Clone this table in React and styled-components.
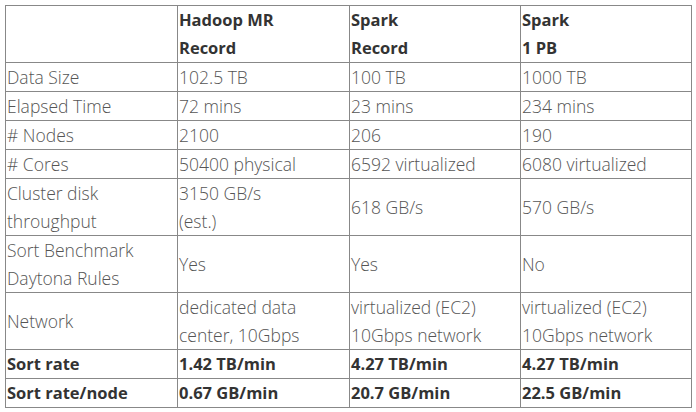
import React from "react";
import styled, { createGlobalStyle } from "styled-components";

const GlobalStyle = createGlobalStyle`
  html, body {
    margin: 0;
    padding: 0;
    background: #fff;
  }
`;

const rows = [
  { label: "Data Size", cells: ["102.5 TB", "100 TB", "1000 TB"] },
  { label: "Elapsed Time", cells: ["72 mins", "23 mins", "234 mins"] },
  { label: "# Nodes", cells: ["2100", "206", "190"] },
  { label: "# Cores", cells: ["50400 physical", "6592 virtualized", "6080 virtualized"] },
  { label: ["Cluster disk", "throughput"], cells: [["3150 GB/s", "(est.)"], "618 GB/s", "570 GB/s"] },
  { label: ["Sort Benchmark", "Daytona Rules"], cells: ["Yes", "Yes", "No"] },
  {
    label: "Network",
    cells: [
      ["dedicated data", "center, 10Gbps"],
      ["virtualized (EC2)", "10Gbps network"],
      ["virtualized (EC2)", "10Gbps network"],
    ],
  },
  { label: "Sort rate", cells: ["1.42 TB/min", "4.27 TB/min", "4.27 TB/min"], bold: true },
  { label: "Sort rate/node", cells: ["0.67 GB/min", "20.7 GB/min", "22.5 GB/min"], bold: true },
];

const lines = (v) =>
  Array.isArray(v) ? v.map((t, i) => <Line key={i}>{t}</Line>) : v;

export default function App() {
  return (
    <>
      <GlobalStyle />
      <Page>
        <Table>
          <colgroup>
            <col style={{ width: 172 }} />
            <col style={{ width: 172 }} />
            <col style={{ width: 171 }} />
            <col style={{ width: 171 }} />
          </colgroup>
          <thead>
            <tr>
              <Head></Head>
              <Head>{lines(["Hadoop MR", "Record"])}</Head>
              <Head>{lines(["Spark", "Record"])}</Head>
              <Head>{lines(["Spark", "1 PB"])}</Head>
            </tr>
          </thead>
          <tbody>
            {rows.map((row, i) => (
              <tr key={i}>
                <Cell $bold={row.bold}>{lines(row.label)}</Cell>
                {row.cells.map((c, j) => (
                  <Cell key={j} $bold={row.bold}>{lines(c)}</Cell>
                ))}
              </tr>
            ))}
          </tbody>
        </Table>
      </Page>
    </>
  );
}

const Page = styled.div`
  padding: 5px;
`;

const Table = styled.table`
  border-collapse: collapse;
  table-layout: fixed;
  width: 687px;
  border: 1px solid #333;
  font-family: "Open Sans", "Liberation Sans", sans-serif;
`;

const Head = styled.th`
  border: 1px solid #888;
  padding: 0 1px;
  height: 56px;
  text-align: left;
  vertical-align: middle;
  font-size: 16.5px;
  font-weight: 700;
  color: #333;
  line-height: 28px;
`;

const Cell = styled.td`
  border: 1px solid #888;
  padding: 0 1px;
  height: 28px;
  vertical-align: middle;
  line-height: 28px;
  font-size: ${(p) => (p.$bold ? "16.5px" : "17.5px")};
  font-weight: ${(p) => (p.$bold ? 700 : 300)};
  color: ${(p) => (p.$bold ? "#333" : "#555")};
`;

const Line = styled.div`
  white-space: nowrap;
`;
